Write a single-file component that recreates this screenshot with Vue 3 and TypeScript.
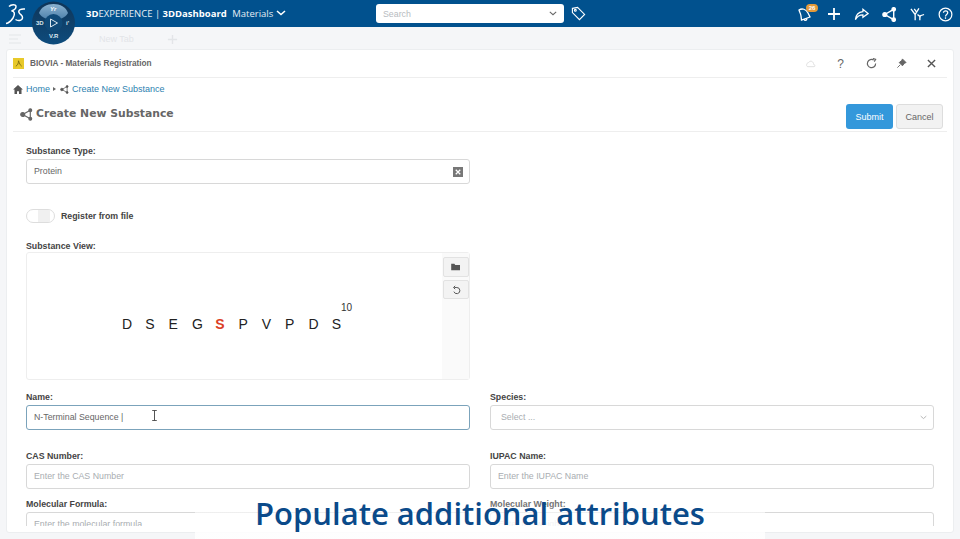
<script setup lang="ts">
const residues = ['D', 'S', 'E', 'G', 'S', 'P', 'V', 'P', 'D', 'S']
</script>

<template>
  <div class="page">
    <header class="topbar">
      <svg class="ds" viewBox="4 3 21 22" width="21" height="22" fill="none" stroke="#fff" stroke-width="1.500">
        <path d="M8 6.500 C10 4.500 15 4 15 6.500 C15 9 12 10.500 10.500 11 C13.500 11 14.500 14 12 18 C10 21 8 23 5 23.500" />
        <path d="M24 9 C20 8.500 17 10 18 12.500 C19 15 22 15 21.500 18 C21 21 16.500 21 14.500 19.500" />
      </svg>
      <div class="compass">
        <svg viewBox="0 0 43 45" width="43" height="45">
          <defs>
            <linearGradient id="cbg" x1="0" y1="0" x2="0" y2="1">
              <stop offset="0" stop-color="#0f3558" />
              <stop offset="1" stop-color="#0e4c7d" />
            </linearGradient>
            <linearGradient id="dome" x1="0" y1="0" x2="0" y2="1">
              <stop offset="0" stop-color="#8bb2d0" />
              <stop offset="1" stop-color="#4d81ab" />
            </linearGradient>
          </defs>
          <circle cx="21.500" cy="23" r="21.500" fill="url(#cbg)" />
          <path d="M7 13 C9 7 15 4 21.500 4 C28 4 34 7 36 13 C33 18 28 19.500 21.500 19.500 C15 19.500 10 18 7 13 Z" fill="url(#dome)" />
          <circle cx="21.500" cy="23" r="9" fill="#0f4a78" />
        </svg>
        <span class="c-yr">Yr</span>
        <span class="c-3d">3D</span>
        <svg class="c-play" viewBox="0 0 10 10" width="10" height="10" fill="none" stroke="#dbe8f0" stroke-width="1"><path d="M1.500 1 L8.500 5 L1.500 9 Z" /></svg>
        <span class="c-i">i'</span>
        <span class="c-vr">V.R</span>
      </div>
      <div class="brand"><b>3D</b>EXPERIENCE | <b>3DDashboard</b> <span class="app">Materials</span>
        <svg viewBox="0 0 10 6" width="10" height="6" fill="none" stroke="#fff" stroke-width="1.600"><path d="M1 1 L5 4.500 L9 1" /></svg>
      </div>
      <div class="search">
        <span>Search</span>
        <svg viewBox="0 0 10 6" width="8" height="5" fill="none" stroke="#666" stroke-width="1.300"><path d="M1 1 L5 4.500 L9 1" /></svg>
      </div>
      <svg class="tag" viewBox="0 0 16 16" width="15" height="15" fill="none" stroke="#fff" stroke-width="1.200"><path d="M1.500 2.500 L7 1.500 L14.500 9 L9 14.500 L1.500 7 Z" /><circle cx="4.600" cy="4.600" r="1" /></svg>
      <div class="actions">
        <div class="bell">
          <svg viewBox="0 0 16 16" width="16" height="16" fill="none" stroke="#fff" stroke-width="1.300"><path d="M2 4 C5 2 9 3 11 7 L13 11 L4.500 14 L4 10 C4 8 2.500 6 2 4 Z" /><path d="M7 13 C7.500 15 9.500 15 10 12.500" /></svg>
          <span class="badge">26</span>
        </div>
        <svg class="plus" viewBox="0 0 12 12" width="12" height="12" stroke="#fff" stroke-width="1.800"><path d="M6 0 V12 M0 6 H12" /></svg>
        <svg viewBox="0 0 16 16" width="15" height="15" fill="none" stroke="#fff" stroke-width="1.300"><path d="M9.500 2.500 L15 7 L9.500 11 V8.500 C6 8.500 3.500 10 1.500 13.500 C2 8.500 5 5.500 9.500 5 Z" /></svg>
        <svg viewBox="0 0 16 16" width="15" height="15" fill="#fff" stroke="#fff" stroke-width="1.500"><path d="M3 8 L12.500 2.500 V13.500 Z" fill="none" /><circle cx="3" cy="8" r="2" /><circle cx="12.500" cy="2.500" r="1.800" /><circle cx="12.500" cy="13.500" r="1.800" /></svg>
        <svg viewBox="0 0 16 16" width="15" height="15" fill="none" stroke="#fff" stroke-width="1.400"><path d="M1 2 L5.500 8 V14 M4.500 2 L7.500 6 M9.500 1.500 L5.500 8 M8 8 L11.500 11 M15 8 L10.500 9.500 V14" /></svg>
        <svg viewBox="0 0 16 16" width="15" height="15" fill="none" stroke="#fff" stroke-width="1.300"><circle cx="8" cy="8" r="6.800" /><path d="M5.800 6.200 C5.800 3.500 10.400 3.500 10.400 6.200 C10.400 8 8 8 8 10" /><path d="M8 11 V12.600" /></svg>
      </div>
    </header>

    <div class="tabs">
      <svg viewBox="0 0 14 12" width="14" height="12" fill="none" stroke="#e3e5e8" stroke-width="1.200"><path d="M1 2 H13 M1 6 H10 M1 10 H13" /></svg>
      <span class="tab">New Tab</span>
      <svg viewBox="0 0 12 12" width="11" height="11" stroke="#e3e5e8" stroke-width="1.500"><path d="M6 1 V11 M1 6 H11" /></svg>
    </div>

    <main class="card">
      <div class="widget-head">
        <span class="biovia"><svg viewBox="0 0 10 10" width="9" height="9" fill="none" stroke="#7a6a10" stroke-width="1"><path d="M2 8 C4 7 5 5 5 2 C6 5 7 7 8.500 8" /></svg></span>
        <span class="widget-title">BIOVIA - Materials Registration</span>
        <div class="widget-tools">
          <span class="cell"><svg viewBox="0 0 12 10" width="11" height="9" fill="none" stroke="#dcdcdc" stroke-width="1"><path d="M3 8.500 H10 C11.500 8.500 11 6 9.500 6 C9.500 3 6 .8 3.800 4 C1.500 4 .8 8.500 3 8.500 Z" /></svg></span>
          <span class="cell q">?</span>
          <span class="cell"><svg viewBox="0 0 12 12" width="11" height="11" fill="none" stroke="#666" stroke-width="1.300"><path d="M10.500 6 A4.500 4.500 0 1 1 8.500 2.300" /><path d="M7.500 .5 L10.500 1.500 L9 4" /></svg></span>
          <span class="cell"><svg viewBox="0 0 12 12" width="11" height="11" fill="#666" stroke="#666"><path d="M7 1 L11 5 L9.500 5.500 L7 8.500 L3.500 5 L6.500 2.500 Z" /><path d="M4.500 7.500 L1.500 10.500" fill="none" /></svg></span>
          <span class="cell"><svg viewBox="0 0 10 10" width="9" height="9" stroke="#555" stroke-width="1.500"><path d="M1 1 L9 9 M9 1 L1 9" /></svg></span>
        </div>
      </div>

      <nav class="crumbs">
        <svg viewBox="0 0 12 11" width="10" height="9" fill="#555"><path d="M6 0 L12 5.500 H10.300 V11 H7.200 V7.500 H4.800 V11 H1.700 V5.500 H0 Z" /></svg>
        <a>Home</a>
        <span class="sep"></span>
        <svg viewBox="0 0 12 12" width="9" height="9" fill="#555" stroke="#555"><path d="M2.500 6 L9.500 2 V10 Z" fill="none" /><circle cx="2.500" cy="6" r="1.700" /><circle cx="9.500" cy="2" r="1.300" /><circle cx="9.500" cy="10" r="1.300" /></svg>
        <a>Create New Substance</a>
      </nav>

      <div class="title-row">
        <h1>
          <svg viewBox="0 0 12 12" width="13" height="13" fill="#666" stroke="#666" stroke-width="1.100"><path d="M2.500 6 L9.500 2 V10 Z" fill="none" /><circle cx="2.500" cy="6" r="1.800" /><circle cx="9.500" cy="2" r="1.300" /><circle cx="9.500" cy="10" r="1.300" /></svg>
          Create New Substance
        </h1>
        <div class="buttons">
          <button class="submit">Submit</button>
          <button class="cancel">Cancel</button>
        </div>
      </div>

      <div class="form">
        <section class="half type-field">
          <label>Substance Type:</label>
          <div class="input">
            <span>Protein</span>
            <span class="clear">
              <svg viewBox="0 0 8 8" width="6" height="6" stroke="#fff" stroke-width="1.700"><path d="M1 1 L7 7 M7 1 L1 7" /></svg>
            </span>
          </div>
        </section>

        <div class="toggle-row">
          <span class="toggle"><i></i></span>
          <span class="toggle-label">Register from file</span>
        </div>

        <section class="half view-field">
          <label>Substance View:</label>
          <div class="viewer">
            <div class="seq">
              <span v-for="(r, i) in residues" :key="i" class="res" :class="{ hot: i === 4 }">{{ r }}</span>
              <sup>10</sup>
            </div>
            <div class="side">
              <button class="tool">
                <svg viewBox="0 0 12 10" width="10" height="8" fill="#555"><path d="M0 1 H4 L5 2.500 H11 V9 H0 Z" /></svg>
              </button>
              <button class="tool">
                <svg viewBox="0 0 12 12" width="10" height="10" fill="none" stroke="#555" stroke-width="1.200"><path d="M4 3 H7 A3.700 3.700 0 1 1 3.500 8" /><path d="M5 1 L3 3 L5 5" /></svg>
              </button>
            </div>
          </div>
        </section>

        <div class="grid">
          <section>
            <label>Name:</label>
            <div class="input focus">
              <span>N-Terminal Sequence |</span>
              <svg class="ibeam" viewBox="0 0 7 12" width="7" height="11" fill="none" stroke="#444" stroke-width="1"><path d="M1 .5 H6 M3.500 .5 V11.500 M1 11.500 H6" /></svg>
            </div>
          </section>
          <section>
            <label>Species:</label>
            <div class="input select">
              <span class="ph">Select ...</span>
              <svg viewBox="0 0 10 6" width="7" height="5" fill="none" stroke="#aaa" stroke-width="1.200"><path d="M1 1 L5 4.500 L9 1" /></svg>
            </div>
          </section>
          <section>
            <label>CAS Number:</label>
            <div class="input"><span class="ph">Enter the CAS Number</span></div>
          </section>
          <section>
            <label>IUPAC Name:</label>
            <div class="input"><span class="ph">Enter the IUPAC Name</span></div>
          </section>
          <section>
            <label>Molecular Formula:</label>
            <div class="input"><span class="ph">Enter the molecular formula</span></div>
          </section>
          <section>
            <label>Molecular Weight:</label>
            <div class="input"><span class="ph">Enter the weight</span></div>
          </section>
        </div>
      </div>
    </main>

    <div class="caption"><span>Populate additional attributes</span></div>
  </div>
</template>

<style>
html, body { margin: 0; padding: 0; background: #f5f6f8; }
</style>

<style scoped>
.page {
  width: 960px;
  height: 539px;
  overflow: hidden;
  position: relative;
  background: #f5f6f8;
  font-family: "Liberation Sans", Arial, sans-serif;
  display: flex;
  flex-direction: column;
}
.topbar {
  height: 27px;
  flex: none;
  background: #01518e;
  color: #fff;
  display: flex;
  align-items: center;
  position: relative;
  padding-left: 5px;
}
.compass {
  position: absolute;
  left: 32px;
  top: 0;
  width: 43px;
  height: 45px;
  z-index: 3;
  color: #dbe8f0;
  font: 700 6px "Liberation Sans", sans-serif;
  line-height: 8px;
}
.compass > svg:first-child { display: block; }
.compass span { position: absolute; }
.c-yr { left: 18px; top: 5px; font-style: italic; color: #fff; }
.c-3d { left: 4px; top: 19px; }
.c-play { position: absolute; left: 17px; top: 18px; }
.c-i { left: 34px; top: 19px; }
.c-vr { left: 17px; top: 32px; }
.brand {
  margin-left: 60px;
  width: 290px;
  font-family: "Open Sans", sans-serif;
  font-size: 9.500px;
  white-space: nowrap;
  color: #e4edf3;
}
.brand b { font-weight: 700; color: #fff; }
.brand .app { margin-left: 3px; margin-right: 3px; }
.brand svg { vertical-align: 1px; }
.search {
  width: 188px;
  height: 19px;
  box-sizing: border-box;
  background: #fff;
  border-radius: 3px;
  display: flex;
  align-items: center;
  justify-content: space-between;
  padding: 0 7px;
  font-size: 8.800px;
  color: #b7bbc0;
  flex: none;
}
.tag { margin-left: 7px; flex: none; }
.actions {
  position: absolute;
  right: 7px;
  top: 6px;
  display: flex;
  align-items: center;
  gap: 13px;
}
.plus { margin: 0 1px 0 2px; }
.bell { position: relative; height: 16px; }
.badge {
  position: absolute;
  left: 9px;
  top: -2px;
  width: 12px;
  height: 8px;
  border-radius: 5px;
  background: #e39a3a;
  color: #fff;
  font-size: 6px;
  font-weight: 700;
  line-height: 8px;
  text-align: center;
}
.tabs {
  height: 22px;
  flex: none;
  display: flex;
  align-items: center;
  box-sizing: border-box;
  padding: 2px 0 0 8px;
  color: #e3e5e8;
  font-size: 9px;
}
.tab { margin-left: 77px; margin-right: 33px; }
.card {
  margin: 0 6px;
  height: 484px;
  flex: none;
  background: #fff;
  border: 1px solid #eceef0;
  border-radius: 3px;
  box-sizing: border-box;
  overflow: hidden;
  padding: 0 6px 0 6px;
}
.widget-head {
  height: 27px;
  display: flex;
  align-items: center;
  border-bottom: 1px solid #eeeeee;
}
.biovia {
  width: 11px;
  height: 11px;
  background: #e8c92a;
  display: flex;
  align-items: center;
  justify-content: center;
}
.widget-title {
  margin-left: 6px;
  font-size: 8.250px;
  font-weight: 700;
  color: #666;
}
.widget-tools {
  margin-left: auto;
  display: flex;
  align-items: center;
}
.cell {
  width: 30.400px;
  display: flex;
  align-items: center;
  justify-content: center;
}
.q { color: #666; font-size: 12px; }
.crumbs {
  height: 22px;
  display: flex;
  align-items: center;
  gap: 2px;
  font-size: 9px;
}
.crumbs a { color: #2c7fb0; margin-left: 1px; }
.sep {
  width: 0;
  height: 0;
  margin: 0 2px 0 1px;
  border-left: 3px solid #666;
  border-top: 2.500px solid transparent;
  border-bottom: 2.500px solid transparent;
}
.title-row {
  height: 32px;
  border-bottom: 1px solid #eeeeee;
  display: flex;
  justify-content: space-between;
  align-items: flex-start;
  box-sizing: border-box;
}
h1 {
  margin: 6px 0 0 7px;
  font-family: "DejaVu Sans", sans-serif;
  font-size: 10.800px;
  font-weight: 700;
  color: #666;
  display: flex;
  align-items: center;
  gap: 3px;
  line-height: 16px;
}
.buttons { display: flex; gap: 3px; margin-top: 4px; margin-right: 4px; }
button { font-family: inherit; box-sizing: border-box; }
.submit {
  width: 47px;
  height: 25px;
  border: none;
  border-radius: 3px;
  background: #3498db;
  color: #fff;
  font-size: 9px;
}
.cancel {
  width: 47px;
  height: 25px;
  border: 1px solid #ddd;
  border-radius: 3px;
  background: #f2f2f2;
  color: #666;
  font-size: 9px;
}
.form { padding: 0 13px; height: 394px; overflow: hidden; }
label {
  display: block;
  font-size: 8.800px;
  font-weight: 700;
  color: #444;
  line-height: 12px;
  margin-bottom: 2px;
}
.half { width: 444px; }
.type-field { padding-top: 13px; }
.input {
  height: 25px;
  border: 1px solid #d8d8d8;
  border-radius: 3px;
  box-sizing: border-box;
  display: flex;
  align-items: center;
  padding: 0 7px;
  font-size: 8.800px;
  color: #666;
  position: relative;
  background: #fff;
}
.input > span:first-child { margin-bottom: 2px; }
.clear {
  margin-left: auto;
  margin-right: -1px;
  width: 10px;
  height: 10px;
  background: #777;
  display: flex;
  align-items: center;
  justify-content: center;
}
.toggle-row {
  display: flex;
  align-items: center;
  gap: 6px;
  margin-top: 25px;
  height: 14px;
}
.toggle {
  width: 29px;
  height: 14px;
  box-sizing: border-box;
  border: 1px solid #ddd;
  border-radius: 7px;
  background: #fff;
  display: block;
}
.toggle i { display: block; width: 12px; height: 12px; margin-left: 11px; background: #f0f0f0; }
.toggle-label { font-size: 8.800px; font-weight: 700; color: #444; }
.view-field { margin-top: 17px; }
.view-field label { margin-bottom: 0; }
.viewer {
  height: 128px;
  border: 1px solid #eeeeee;
  border-radius: 3px;
  box-sizing: border-box;
  display: flex;
  position: relative;
}
.seq {
  flex: 1;
  position: relative;
  padding: 63px 0 0 95px;
  display: flex;
  font-size: 14px;
  color: #222;
  line-height: 16px;
}
.res { width: 23.300px; flex: none; }
.hot { color: #db3f26; font-weight: 700; }
sup {
  position: absolute;
  left: 314px;
  top: 49px;
  font-size: 10px;
  line-height: 12px;
  color: #333;
}
.side {
  width: 27px;
  background: #fafafa;
  display: flex;
  flex-direction: column;
  align-items: center;
  gap: 3px;
  padding-top: 4px;
}
.tool {
  width: 26px;
  height: 20px;
  padding: 0;
  border: 1px solid #e2e2e2;
  border-radius: 2px;
  background: #f3f3f3;
  display: flex;
  align-items: center;
  justify-content: center;
}
.tool:last-child { height: 19px; }
.grid {
  display: grid;
  grid-template-columns: 444px 444px;
  grid-template-rows: 59px 48px 48px;
  column-gap: 20px;
  margin-top: 11px;
}
.focus { border-color: #7ba3bb; }
.ibeam { position: absolute; left: 124px; top: 4px; }
.select { justify-content: space-between; padding: 0 6px 0 10px; }
.ph { color: #a9adb1; }
.caption {
  position: absolute;
  left: 195px;
  top: 492px;
  width: 570px;
  height: 47px;
  background: linear-gradient(to bottom, rgba(255, 255, 255, 0.25) 30%, rgba(255, 255, 255, 0.85) 55%);
  text-align: center;
  color: #0a4a8a;
  font-family: "Open Sans", sans-serif;
  font-size: 31px;
  font-weight: 600;
  line-height: 43px;
  white-space: nowrap;
}
</style>
